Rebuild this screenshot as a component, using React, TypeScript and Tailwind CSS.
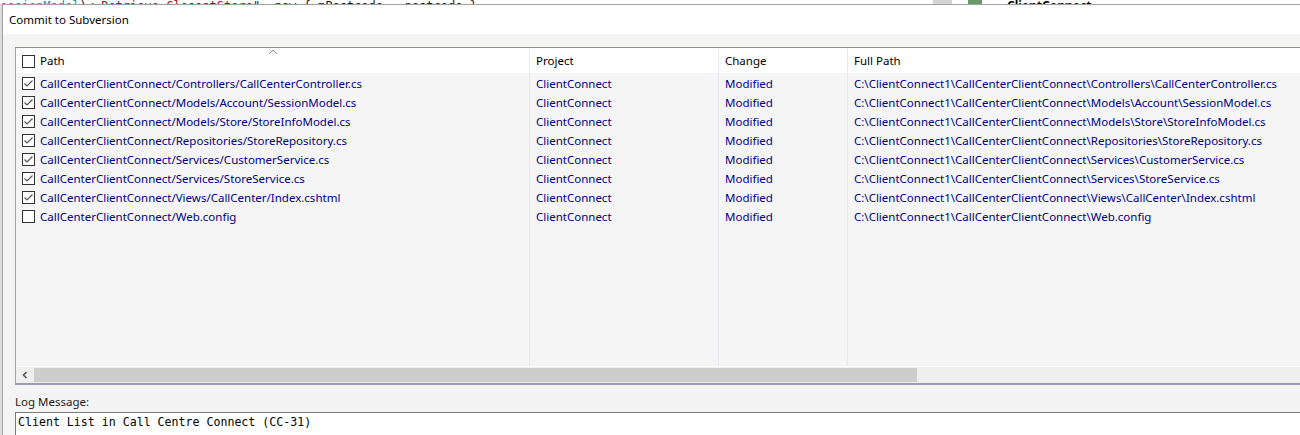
import React from "react";

const files = [
  { path: "CallCenterClientConnect/Controllers/CallCenterController.cs", checked: true },
  { path: "CallCenterClientConnect/Models/Account/SessionModel.cs", checked: true },
  { path: "CallCenterClientConnect/Models/Store/StoreInfoModel.cs", checked: true },
  { path: "CallCenterClientConnect/Repositories/StoreRepository.cs", checked: true },
  { path: "CallCenterClientConnect/Services/CustomerService.cs", checked: true },
  { path: "CallCenterClientConnect/Services/StoreService.cs", checked: true },
  { path: "CallCenterClientConnect/Views/CallCenter/Index.cshtml", checked: true },
  { path: "CallCenterClientConnect/Web.config", checked: false },
];

function Checkbox({ checked }: { checked: boolean }) {
  return (
    <span className="flex h-[13px] w-[13px] shrink-0 items-center justify-center border border-[#333] bg-white">
      {checked && (
        <svg width="11" height="11" viewBox="0 0 11 11">
          <path d="M1.5 5.5 L4 8 L9.5 2.5" fill="none" stroke="#555" strokeWidth="1.2" />
        </svg>
      )}
    </span>
  );
}

export default function App() {
  const cell = "flex h-[19px] items-center whitespace-nowrap pl-[6px] text-[#000088]";
  return (
    <div className="h-[435px] w-[1300px] overflow-hidden bg-white font-['Noto_Sans',sans-serif] text-[11.5px] text-[#1a1a1a]">
      {/* editor behind the dialog */}
      <div className="flex h-[4px] items-end overflow-hidden bg-white font-['DejaVu_Sans_Mono',monospace] text-[12px] leading-[12px]">
        <div className="translate-y-[8px] whitespace-nowrap">
          <span className="text-[#2b91af]">essionModel</span>
          <span className="text-[#1a1a1a]">)&lt; </span>
          <span className="text-[#a31515]">Retrieve ClosestStore</span>
          <span className="text-[#1a1a1a]">", </span>
          <span className="text-[#0000ff]">new</span>
          <span className="text-[#1a1a1a]"> {"{"} mPostcode = postcode {"}"}</span>
        </div>
        <div className="ml-auto flex h-full w-[367px] items-end">
          <div className="h-full w-[19px] bg-[#d4d4d4]" />
          <div className="ml-[16px] h-[4px] w-[14px] bg-[#6a9a6a]" />
          <div className="ml-[25px] translate-y-[8px] whitespace-nowrap font-['Noto_Sans',sans-serif] text-[12px] font-bold text-black">
            ClientConnect
          </div>
        </div>
      </div>

      <div className="flex h-[431px]">
        <div className="w-[2px] bg-[#dcdcdc]" />
        <div className="flex flex-1 flex-col border-l border-t border-[#a0a0a0]">
          <div className="flex h-[29px] items-center bg-white pl-[6px] text-black">
            Commit to Subversion
          </div>

          <div className="flex flex-1 flex-col bg-[#f4f4f4] pl-[12px] pt-[13px]">
            <div className="flex h-[338px] flex-col border-b-2 border-l border-t border-b-[#9a9ab0] border-l-[#a0a0a0] border-t-[#8c8c9a]">
              <div className="grid flex-1 grid-cols-[514px_189px_129px_1fr] grid-rows-[25px_1fr]">
                {/* header */}
                <div className="relative flex items-center gap-[5px] border-r border-[#e4e8ef] bg-white pl-[6px] pt-px text-black">
                  <Checkbox checked={false} />
                  <span>Path</span>
                  <svg className="absolute left-[252px] top-[1px]" width="10" height="6" viewBox="0 0 10 6">
                    <path d="M1 5 L5 1 L9 5" fill="none" stroke="#8a8a8a" strokeWidth="1" />
                  </svg>
                </div>
                <div className="flex items-center border-r border-[#e4e8ef] bg-white pl-[6px] pt-px text-black">Project</div>
                <div className="flex items-center border-r border-[#e4e8ef] bg-white pl-[6px] pt-px text-black">Change</div>
                <div className="flex items-center bg-white pl-[6px] pt-px text-black">Full Path</div>

                {/* body columns */}
                <div className="flex flex-col border-r border-[#e4e8ef] bg-[#f5f5f5] pt-px">
                  {files.map((f) => (
                    <div key={f.path} className={`${cell} gap-[5px]`}>
                      <Checkbox checked={f.checked} />
                      <span>{f.path}</span>
                    </div>
                  ))}
                </div>
                <div className="flex flex-col border-r border-[#e4e8ef] bg-[#f5f5f5] pt-px">
                  {files.map((f) => (
                    <div key={f.path} className={cell}>ClientConnect</div>
                  ))}
                </div>
                <div className="flex flex-col border-r border-[#e4e8ef] bg-[#f5f5f5] pt-px">
                  {files.map((f) => (
                    <div key={f.path} className={cell}>Modified</div>
                  ))}
                </div>
                <div className="flex flex-col bg-[#f5f5f5] pt-px">
                  {files.map((f) => (
                    <div key={f.path} className={cell}>
                      {"C:\\ClientConnect1\\" + f.path.split("/").join("\\")}
                    </div>
                  ))}
                </div>
              </div>

              {/* horizontal scrollbar */}
              <div className="flex h-[17px] border-t border-white bg-[#efefef]">
                <div className="flex w-[18px] items-center justify-center">
                  <svg width="8" height="8" viewBox="0 0 8 8">
                    <path d="M5.5 1 L2.5 4 L5.5 7" fill="none" stroke="#555" strokeWidth="1.6" />
                  </svg>
                </div>
                <div className="my-[1px] w-[883px] bg-[#cdcdcd]" />
              </div>
            </div>

            <div className="mt-[10px] leading-[14px] text-[#1a1a1a]">Log Message:</div>
            <div className="mt-[3px] flex-1 border-l border-t border-[#7a7a7a] bg-white pl-[2px] pt-px font-['DejaVu_Sans_Mono',monospace] text-[11.6px] leading-[16px] text-black">
              Client List in Call Centre Connect (CC-31)
            </div>
          </div>
        </div>
      </div>
    </div>
  );
}
